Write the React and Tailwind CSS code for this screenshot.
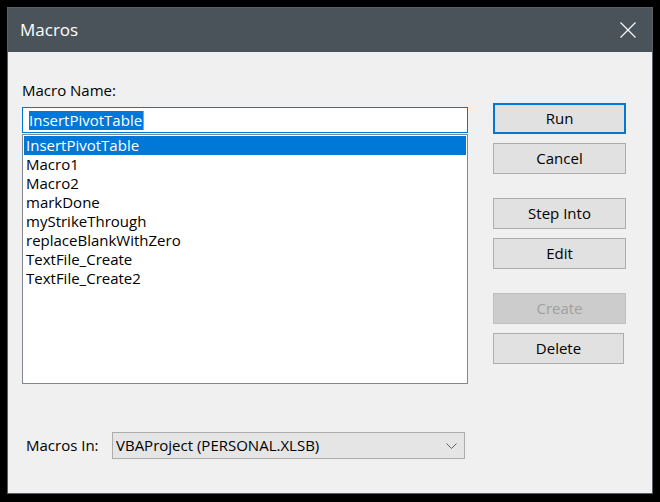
import { useState } from 'react'

const macros = [
  'InsertPivotTable',
  'Macro1',
  'Macro2',
  'markDone',
  'myStrikeThrough',
  'replaceBlankWithZero',
  'TextFile_Create',
  'TextFile_Create2',
]

function DialogButton({ children, primary, disabled, className = '' }) {
  let look = 'bg-[#e1e1e1] border border-[#adadad] text-black'
  if (primary) look = 'bg-[#e1e1e1] border-2 border-[#0078d7] text-black'
  if (disabled) look = 'bg-[#cccccc] border border-[#bfbfbf] text-[#a0a0a0]'
  return (
    <button
      disabled={disabled}
      className={`h-[31px] flex items-center justify-center text-[15px] leading-[19px] ${look} ${className}`}
    >
      {children}
    </button>
  )
}

export default function App() {
  const [selected, setSelected] = useState(0)

  return (
    <div className="w-[660px] h-[502px] bg-black pl-[7px] pt-[7px] font-['Open_Sans',sans-serif]">
      <div className="w-[646px] h-[487px] border border-[#5b6066] bg-[#f0f0f0] flex flex-col">
        <div className="h-[44px] bg-[#4b535a] flex items-center justify-between pl-[12px] pr-[16px]">
          <span className="text-white text-[17px] leading-[20px]">Macros</span>
          <svg width="16" height="16" viewBox="0 0 16 16" className="block">
            <path d="M0.5 0.5 L15.5 15.5 M15.5 0.5 L0.5 15.5" stroke="#ffffff" strokeWidth="1.1" fill="none" />
          </svg>
        </div>

        <div className="flex flex-col px-[14px]">
          <div className="flex gap-[25px]">
            <div className="w-[446px] flex flex-col pt-[29px]">
              <div className="text-[15px] leading-[19px] text-black">Macro Name:</div>
              <div className="mt-[7px] h-[26px] border border-[#0078d7] bg-white flex items-center pl-[6px]">
                <span className="bg-[#0078d7] text-white text-[15px] leading-[19px] pr-[1px] border-r border-[#ff8c1a]">
                  {macros[selected]}
                </span>
              </div>
              <div className="mt-[1px] h-[250px] border border-[#828790] bg-white p-[1px]">
                {macros.map((m, i) => (
                  <div
                    key={m}
                    onClick={() => setSelected(i)}
                    className={`h-[19px] pl-[2px] text-[15px] leading-[19px] ${i === selected ? 'bg-[#0078d7] text-white' : 'text-black'}`}
                  >
                    {m}
                  </div>
                ))}
              </div>
            </div>

            <div className="w-[133px] flex flex-col pt-[51px]">
              <DialogButton primary>Run</DialogButton>
              <DialogButton className="mt-[9px]">Cancel</DialogButton>
              <DialogButton className="mt-[24px]">Step Into</DialogButton>
              <DialogButton className="mt-[9px]">Edit</DialogButton>
              <DialogButton disabled className="mt-[24px]">Create</DialogButton>
              <DialogButton className="mt-[9px] w-[131px]">Delete</DialogButton>
            </div>
          </div>

          <div className="mt-[48px] flex items-center">
            <span className="pl-[4px] w-[90px] text-[15px] leading-[19px] text-black">Macros In:</span>
            <div className="w-[353px] h-[27px] border border-[#adadad] bg-[#e5e5e5] flex items-center justify-between pl-[3px] pr-[7px]">
              <span className="text-[15px] leading-[19px] text-black">VBAProject (PERSONAL.XLSB)</span>
              <svg width="11" height="6" viewBox="0 0 11 6" className="block">
                <path d="M0.5 0.5 L5.5 5.5 L10.5 0.5" stroke="#606060" strokeWidth="1" fill="none" />
              </svg>
            </div>
          </div>
        </div>
      </div>
    </div>
  )
}
